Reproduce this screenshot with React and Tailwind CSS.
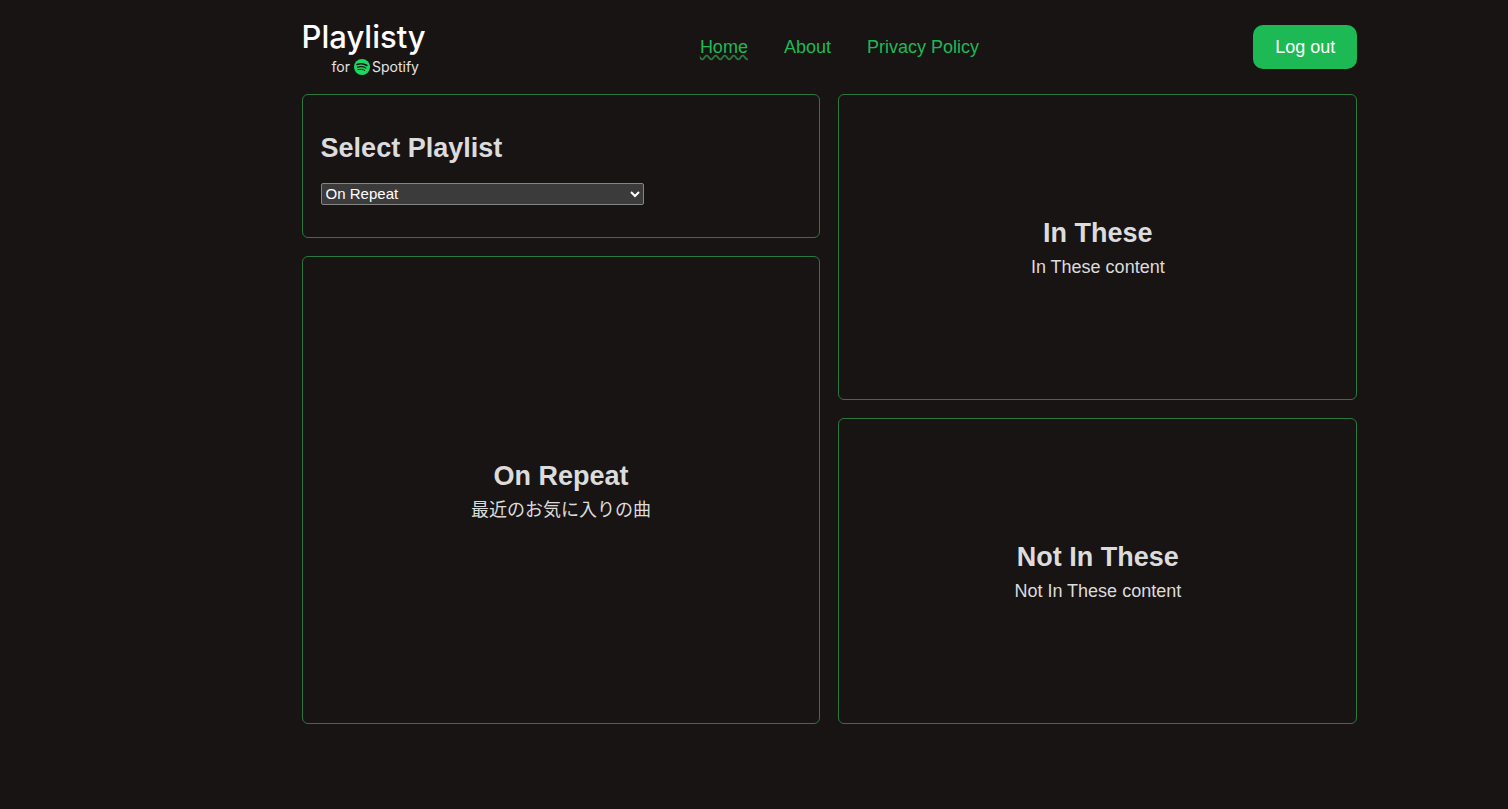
const navLinks = [
  { label: 'Home', href: '#home', active: true },
  { label: 'About', href: '#about' },
  { label: 'Privacy Policy', href: '#privacy' },
];

function SpotifyMark() {
  return (
    <svg viewBox="0 0 24 24" className="mr-0.5 size-4" aria-hidden="true">
      <circle cx="12" cy="12" r="12" fill="#1ed760" />
      <g fill="none" stroke="#191414" strokeLinecap="round">
        <path d="M4.6 8.2c4.9-1.5 10.4-1 14.8 1.5" strokeWidth="2.3" />
        <path d="M5.3 12.2c4.2-1.2 8.8-.7 12.4 1.4" strokeWidth="1.9" />
        <path d="M5.9 15.9c3.6-.9 7.2-.5 10.3 1.3" strokeWidth="1.5" />
      </g>
    </svg>
  );
}

function Logo() {
  return (
    <a href="#home" className="flex flex-col pt-1 font-['Inter',sans-serif] text-white">
      <span className="text-[31px] leading-9 font-medium">Playlisty</span>
      <span className="flex items-center pl-[30px] text-sm leading-6 text-[#e4e4e4]">
        for&nbsp;
        <SpotifyMark />
        Spotify
      </span>
    </a>
  );
}

function Card({ className, children }) {
  return (
    <section
      className={`flex flex-col justify-center rounded-md border border-[#29793f] px-[18px] ${className}`}
    >
      {children}
    </section>
  );
}

function Title({ children }) {
  return <h2 className="text-[27px] leading-10 font-bold">{children}</h2>;
}

function InfoCard({ title, text, className }) {
  return (
    <Card className={`items-center text-center ${className}`}>
      <Title>{title}</Title>
      <p className="leading-7">{text}</p>
    </Card>
  );
}

export default function App() {
  return (
    <div className="min-h-screen bg-[#191414] font-['Liberation_Sans','Noto_Sans_CJK_JP',sans-serif] text-lg text-[#dcdcdc]">
      <div className="mr-[10%] ml-[20%]">
        <header className="flex h-[94px] items-center justify-between">
          <Logo />
          <nav className="flex gap-9">
            {navLinks.map((link) => (
              <a
                key={link.label}
                href={link.href}
                aria-current={link.active ? 'page' : undefined}
                className={`text-[#1db954] ${link.active ? 'underline decoration-[#29793f] decoration-wavy decoration-auto' : ''}`}
              >
                {link.label}
              </a>
            ))}
          </nav>
          <button type="button" className="h-11 rounded-[10px] bg-[#1db954] px-[22px] text-white">
            Log out
          </button>
        </header>
        <main className="grid auto-rows-[144px] grid-cols-2 gap-[18px]">
          <Card className="col-start-1 items-start">
            <Title>
              <label htmlFor="playlist">Select Playlist</label>
            </Title>
            <select
              id="playlist"
              className="mt-[15px] h-[22px] w-[323px] rounded-xs border border-[#858585] bg-[#3b3b3b] text-[15px] text-white scheme-dark"
            >
              <option>On Repeat</option>
            </select>
          </Card>
          <InfoCard
            title="On Repeat"
            text="最近のお気に入りの曲"
            className="col-start-1 row-span-3 row-start-2"
          />
          <InfoCard
            title="In These"
            text="In These content"
            className="col-start-2 row-span-2 row-start-1"
          />
          <InfoCard
            title="Not In These"
            text="Not In These content"
            className="col-start-2 row-span-2 row-start-3"
          />
        </main>
      </div>
    </div>
  );
}
